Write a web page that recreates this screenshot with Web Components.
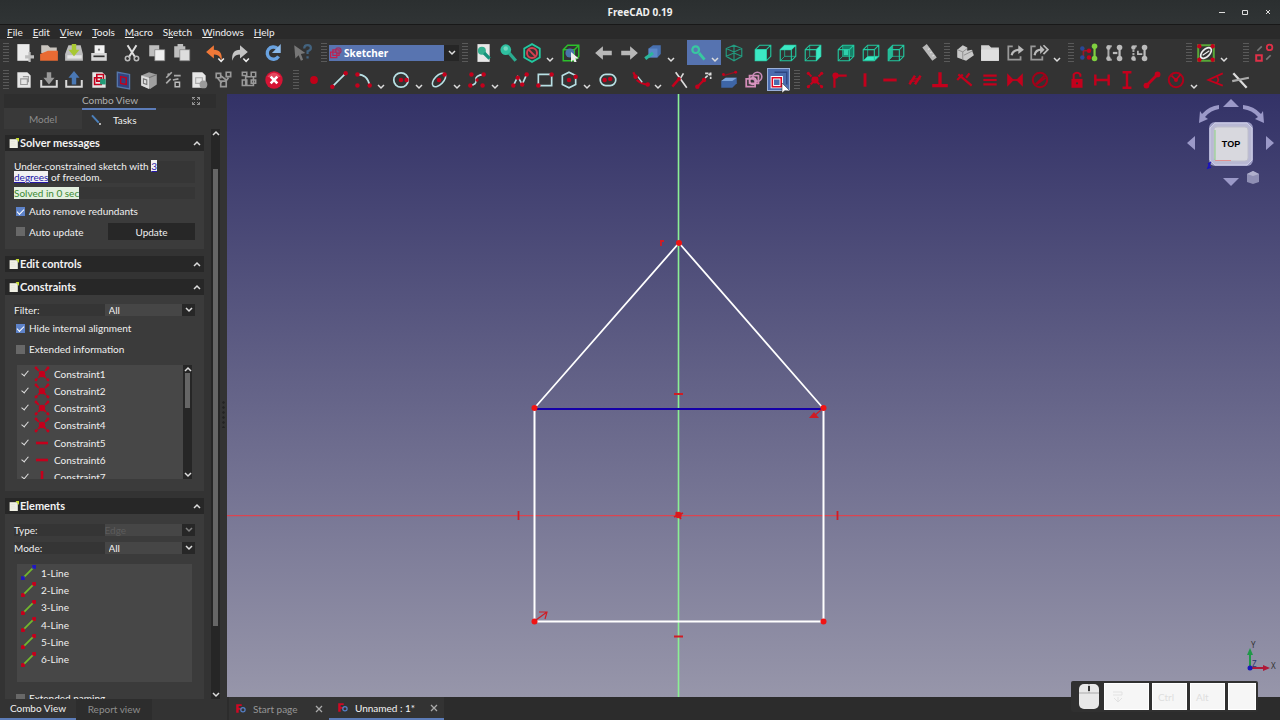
<!DOCTYPE html>
<html lang="en">
<head>
<meta charset="utf-8">
<title>FreeCAD 0.19</title>
<style>
html, body { margin: 0; height: 100%; background: #333; }
body { font-family: Lato, "Noto Sans", sans-serif; font-size: 10px; color: #f0f0f0; overflow: hidden; }
</style>
</head>
<body>
<cad-window></cad-window>
<script>
const R = '#c4001c', T = '#22c9a0', W = '#dcdcdc', B = '#b8e0e4';
const dot = (x, y, c = R, r = 2) => `<circle cx="${x}" cy="${y}" r="${r}" fill="${c}"/>`;
const stroke = (d, c, w = 1.5, extra = '') => `<path d="${d}" fill="none" stroke="${c}" stroke-width="${w}" ${extra}/>`;
const fill = (d, c, extra = '') => `<path d="${d}" fill="${c}" ${extra}/>`;
const cube = stroke('M3 7L7 3H17V13L13 17H3ZM3 7H13V17M13 7L17 3', T, 1);
const cubeBack = stroke('M7 3V13H17M7 13L3 17', T, .8, 'opacity=".8"');
const sheet = fill('M4 3H13L16 6V17H4Z', '#e6e6e6');
const linked = a => stroke('M8 4H5V16H8', '#aaa', 1.8, a) + dot(5, 5, '#bbb', 2) + dot(5, 15, '#bbb', 2) + stroke('M15 5V15', '#bbb', 2) + dot(15, 5, '#bbb', 2.5) + dot(15, 15, '#bbb', 2.5);
const ICONS = {
  'new': fill('M4 2H15V17H4Z', '#ececec') + fill('M11 12h3v-3h2v3h3v3h-3v3h-2v-3h-3z', '#bdbdbd'),
  open: fill('M3 3H9L11 5H17V10H3Z', '#c9c4be') + fill('M2 16V11L9 8H18V17H2Z', '#e86a33'),
  save: fill('M5 3H16L18 11V17H2V11Z', '#bdbdbd') + fill('M4 12H17V15H4Z', '#e4e4e4') + fill('M8 2h4v5h3l-5 6l-5-6h3z', '#a8c832'),
  print: fill('M6 3H15V10H6Z', '#f2f2f2') + fill('M3 10H17V17H3Z', '#d8d8d8') + stroke('M5 13H15', '#333', 1.5) + dot(10, 7, '#777', 1),
  cut: stroke('M6 3L13 14M14 3L7 14', '#e0e0e0', 1.8) + '<circle cx="6" cy="15" r="2" fill="none" stroke="#bbb" stroke-width="1.4"/><circle cx="14" cy="15" r="2" fill="none" stroke="#bbb" stroke-width="1.4"/>',
  copy: fill('M3 3H12V13H3Z', '#bebebe') + fill('M8 7H17V17H8Z', '#eee', 'stroke="#777" stroke-width=".6"'),
  paste: fill('M3 4H6V2H11V4H13V14H3Z', '#bebebe') + fill('M8 7H17V17H8Z', '#ddd', 'stroke="#777" stroke-width=".6"'),
  undo: fill('M2 9L9 3V7Q17 7 16 17Q14 11 9 11.500V15Z', '#f07838') + stroke('M13 15L15.500 17.500L18 15', '#eee', 1.4),
  redo: fill('M17 9L10 3V7Q2 7 3 17Q5 11 10 11.500V15Z', '#c4c4c4') + stroke('M13 15L15.500 17.500L18 15', '#eee', 1.4),
  refresh: stroke('M14 6A5.500 5.500 0 1 0 15 13', '#69a2e0', 3) + fill('M17 2V10H9Z', '#8ab8e8'),
  help: fill('M3 3L13 10L9 11L11 16L9 17L7 12L4 15Z', '#777') + '<path d="M12 6q0-3 3-3t3 2.500q0 2-3 3V11M15 13v2" fill="none" stroke="#43637f" stroke-width="2"/>',
  fitAll: fill('M5 2H16V18H5Z', '#e8e8e8') + dot(9, 8, '#35b090', 3.6) + stroke('M11 10L16 15', '#16927c', 3),
  fitSel: dot(8, 7, '#2fc0a0', 4.8) + dot(8, 6, '#73d8c0', 2) + stroke('M11 10L17 17', '#2aac90', 3),
  draw: stroke('M10 2L17 6V14L10 18L3 14V6Z', T, 1.6) + '<circle cx="10" cy="10" r="4.500" fill="none" stroke="#d64050" stroke-width="1.800"/>' + stroke('M7 7L13 13', '#d64050', 1.8),
  bbox: stroke('M3 7L7 3H17V13L13 17H3ZM3 7H13V17M13 7L17 3', '#2cc02c', 1.3) + dot(9, 10, '#4974a8', 4) + fill('M10 9L17 15L14 15L15 18L13 18L12 16L10 18Z', '#eee'),
  left: fill('M2 10L9 4V8H17V12H9V16Z', '#b8b8b8'), right: fill('M18 10L11 4V8H3V12H11V16Z', '#b8b8b8'),
  link: fill('M6 6L10 3H17V11L14 14H6Z', '#4870b0') + fill('M6 6H14V14H6Z', '#5b88c8') + stroke('M3 15L10 10', '#2ab69b', 3),
  zoom: dot(7, 7, '#38c8a0', 4) + dot(7, 7, '#5878b0', 2) + stroke('M10 10L15 16', '#38c8a0', 2.5),
  iso: stroke('M10 3L17 6V13L10 17L3 13V6ZM3 6L10 9L17 6M10 9V17M10 3V10L3 13M10 10L17 13', '#239c80', 1),
  front: cube + fill('M3 7H13V17H3Z', '#3ce8c4'), top: cubeBack + cube + fill('M3 7L7 3H17L13 7Z', '#3ce8c4'),
  rightv: cubeBack + cube + fill('M13 7L17 3V13L13 17Z', '#3ce8c4'), rear: fill('M7 3H17V13H7Z', '#178068') + cube + cubeBack + fill('M8 7H12V12H8Z', '#2fd0ac'),
  bottom: fill('M3 17L7 13H17L13 17Z', '#3ce8c4') + cube + cubeBack, leftv: fill('M3 7L7 3V13L3 17Z', '#27b898') + cube + cubeBack,
  ruler: fill('M4 5L8 2L17 14L13 17Z', '#b8b8b8') + stroke('M9 7l1.500-1M11 10l1.500-1M13 13l1.500-1', '#ddd', 1),
  part: fill('M3 7L8 3L12 5V8L16 7L18 12L11 17L3 14Z', '#c8c8c8') + stroke('M3 7L8 9L12 6M8 9V16M9 12L17 8', '#888', .8),
  group: fill('M2 3H9L11 5H18V17H2Z', '#d2d2d2') + fill('M2 7H18V17H2Z', '#e0e0e0'),
  exportl: stroke('M8 4H4V16H15V13', '#999', 1.6) + stroke('M7 12Q8 7 15 7', '#bbb', 2) + fill('M13 3L18 7L13 11Z', '#bbb'),
  exportm: stroke('M7 4H3V16H13V13', '#999', 1.6) + stroke('M6 12Q7 7 12 7', '#bbb', 2) + fill('M11 3L15 7L11 11Z', '#bbb') + stroke('M14 3L18 7L14 11', '#bbb', 1.5),
  conSel: stroke('M5 5V14M5 8H10', '#9a1828', 1.5) + dot(4, 6, '#284898') + dot(4, 14, '#284898') + dot(10, 8, R) + dot(10, 14, R) + stroke('M15 5V15', '#80d040', 2) + dot(15, 4, '#80d040', 2.5) + dot(15, 15, '#80d040', 2.5),
  links: linked('') + stroke('M9 10H13', '#bbb', 2), linkd: linked('stroke-dasharray="2 1"') + stroke('M9 8V11H13', '#bbb', 1.5),
  virtual: stroke('M3 3H17V17H3Z', '#58a838', 1.8) + dot(4, 4) + dot(16, 4) + dot(4, 16) + dot(16, 16) + '<ellipse cx="10" cy="10" rx="6" ry="3.300" transform="rotate(-45 10 10)" fill="#333" stroke="#eee" stroke-width="1.500"/>' + stroke('M7 12L13 8', '#eee', 1),
  clone: stroke('M3 12H8V17H3Z', '#e03048', 1.8) + '<circle cx="15" cy="5" r="2.500" fill="none" stroke="#e03048" stroke-width="1.600"/>' + stroke('M4 8L8 4M12 16L16 12', '#777', 1.5),
  edit: sheet + stroke('M7 9h6v5H7zM9 7h5v5', '#999', 1),
  leave: stroke('M3 10V16H17V10', '#d8d8d8', 1.8) + fill('M8 3h4v5h3l-5 6l-5-6h3z', '#999'),
  viewsk: stroke('M3 10V16H17V10', '#d8d8d8', 1.8) + fill('M8 14h4v-6h3l-5-6l-5 6h3z', '#4a78b4'),
  map: sheet + stroke('M6 8h6v6H6zM8 5h6v6H8z', R, 1.4) + fill('M11 9h5v5h-5z', '#229c78'),
  section: fill('M4 3L15 5V18L4 16Z', '#33447f', 'stroke="#5577aa" stroke-width="1.200"') + stroke('M7 7L12 8V14L7 13Z', R, 1.3),
  body: fill('M3 6L10 3L17 5V14L11 18L3 15Z', '#a0a0a0') + fill('M3 6L10 8V18L3 15Z', '#ddd') + stroke('M5 9l3 1v4l-3-1zM10 8l7-3', '#777', 1),
  validate: stroke('M3 8L8 3M10 6H16M3 13L7 9M9 10L14 9', '#aaa', 1.5) + stroke('M11 12h4v4h-4z', '#bbb', 1.3) + dot(5, 5, '#aaa', 1),
  merge: sheet + stroke('M7 8h6v5H7z', '#aaa', 1) + dot(14, 14, '#9a9a9a', 3.5),
  mirror: stroke('M3 4h4v4H3zM12 3h4v4h-4zM7 11h5v5H7zM7 6L12 10M14 8L11 12M4 8L8 13', '#999', 1.5),
  grid: stroke('M4 3h4v3H4zM12 3h4v4h-4zM4 10h4v5H4zM12 10h4v3h-4zM7 7h7v8H7z', '#999', 1.4),
  stop: dot(10, 10, '#d41434', 7.8) + '<path d="M4 7Q10 0 16 7Q10 9 4 7" fill="#ec6070" opacity=".7"/>' + stroke('M7 7L13 13M13 7L7 13', '#fff', 2.4),
  point: dot(10, 10, '#c00018', 3.5),
  line: stroke('M4 16L16 4', B) + dot(4, 16) + dot(16, 4),
  arc: stroke('M5 5Q14 5 16 15', B) + dot(5, 5) + dot(16, 15) + dot(5, 15),
  circle: '<circle cx="10" cy="10" r="6.500" fill="none" stroke="#b8e0e4" stroke-width="1.600"/>' + dot(10, 10) + dot(15, 10),
  conic: '<ellipse cx="10" cy="10" rx="7.500" ry="4" transform="rotate(-45 10 10)" fill="none" stroke="#b8e0e4" stroke-width="1.400"/>' + dot(10, 10) + dot(15, 5),
  spline: stroke('M4 15Q10 14 9 10T16 5', B) + dot(4, 15) + dot(5, 5) + dot(15, 15) + dot(16, 5) + dot(10, 10, R, 1.5),
  poly: stroke('M4 15L8 7L12 14L16 5', B) + dot(4, 15) + dot(8, 8) + dot(12, 14) + dot(16, 5),
  rect: stroke('M4 5H16V15H4Z', B) + dot(16, 5) + dot(4, 15),
  hex: stroke('M10 3L16 6V14L10 17L4 14V6Z', B) + dot(10, 10) + dot(16, 7),
  slot: '<rect x="3" y="5" width="14" height="10" rx="5" fill="none" stroke="#b8e0e4" stroke-width="1.500"/>' + dot(7, 10) + dot(12, 9),
  fillet: stroke('M4 3L6 7M7 10Q12 14 17 14', R, 2) + stroke('M8 7L12 12', B, 1.2) + dot(6, 7) + dot(17, 14),
  trim: stroke('M7 3L17 17M14 4L11 9', W) + stroke('M10 9L4 16', R, 2.2) + dot(10, 9, R, 1.7),
  extend: stroke('M4 16L10 10', R, 2) + dot(4, 16) + dot(10, 10) + stroke('M11 8L16 4M11 4H16V9', W, 1.5, 'stroke-dasharray="3 1"'),
  external: fill('M3 11L7 8H17V13L13 17H3Z', '#3e66a6') + fill('M3 11L7 8H17L13 11Z', '#7aa2d8') + stroke('M5 6L16 3', '#8c1422', 1.2) + dot(5, 5, R, 1.3) + dot(16, 3, R, 1.3),
  carbon: stroke('M3 9h8v7H3zM6 6h8v7H6z', '#d48cb8', 1.6) + '<circle cx="13" cy="7" r="4" fill="none" stroke="#c88cb8" stroke-width="1.500"/><circle cx="9" cy="11" r="3" fill="none" stroke="#d898c0" stroke-width="1.300"/>',
  construct: stroke('M6 3H17V14', '#2d4580', 1.2) + '<path d="M4 8H12V16H4Z" fill="none" stroke="#fff" stroke-width="3"/><path d="M4 8H12V16H4Z" fill="none" stroke="#e00824" stroke-width="1.400"/>',
  coincident: stroke('M4 4L16 16M16 4L4 16', R, 1.8, 'stroke-dasharray="4 1"') + dot(10, 10, R, 3.2) + dot(4, 4, R, 1.4) + dot(16, 4, R, 1.4) + dot(4, 16, R, 1.4) + dot(16, 16, R, 1.4),
  ponto: stroke('M5 17V6H16', R, 2) + dot(6, 6, R, 2.8), vert: stroke('M10 4V16', R, 2.6), horiz: stroke('M4 10H16', R, 2.6),
  parallel: stroke('M5 14L10 6M10 14L15 6', R, 2.2) + stroke('M5 11H12M8 9H15', R, 1.2), perp: stroke('M10 3V16M3 15H17', R, 3),
  tangent: stroke('M4 5L16 15M3 10L8 5M11 8L14 4', R, 2), equal: stroke('M4 6H16M4 10H16M4 14H16', R, 2),
  sym: fill('M3 4L9 10L3 16ZM17 4L11 10L17 16Z', R) + stroke('M8 10H12', R, 1.5), block: '<circle cx="10" cy="10" r="6.500" fill="none" stroke="#a40018" stroke-width="1.800"/>' + stroke('M6 14L14 6M7 14L15 8', '#a40018', 1.5),
  lock: fill('M5 9H15V17H5Z', R) + stroke('M7 9V5Q10 2 13 5V7', R, 1.8) + dot(10, 13, '#333', 1), hdist: stroke('M4 5V15M16 5V15M4 10H16', R, 2.2), vdist: stroke('M6 3H14M6 17H14M10 3V17', R, 2.2),
  dist: stroke('M4 16L16 4', R, 2.5) + dot(5, 15, R, 2.6) + dot(15, 5, R, 2.6), radius: '<circle cx="10" cy="10" r="6.500" fill="none" stroke="#b0001a" stroke-width="1.800"/>' + stroke('M10 10L14 5M6 6L10 10', R, 1.5) + dot(10, 10, R, 1.8),
  angle: stroke('M17 4L4 10L17 15M11 6Q15 10 11 13', R, 1.6), snell: stroke('M4 4L16 17', '#ddd', 2) + stroke('M3 11L18 8', '#aaa', 2),
  wb: stroke('M3 9h8v7H3zM6 6h8v7H6z', '#c02050', 1.6) + '<circle cx="13" cy="7" r="3.500" fill="none" stroke="#a03060" stroke-width="1.500"/>',
  note: fill('M3 3H17V18H3Z', '#f0f0e4') + fill('M13 1H19V8Z', '#c8e030') + stroke('M5 7H12M5 10H12M5 13H14', '#e0e0d8', 1),
  pencil: stroke('M4 3L14 14', '#4c80bc', 3) + dot(16, 16, '#ddd', 1.5),
  lineGreen: stroke('M4 16L16 4', '#72b82c', 1.8) + dot(4, 16, R, 2.3) + dot(16, 4, R, 2.3),
  lineBlue: stroke('M4 16L16 4', '#72b82c', 1.8) + '<path d="M2 14h4v4H2zM14 2h4v4h-4z" fill="#2018c0"/>',
  logo: fill('M3 3H12V6H7V9H11V12H7V17H3Z', '#d00824') + '<circle cx="14" cy="12" r="3.500" fill="none" stroke="#5580c8" stroke-width="2"/>'
};
const SVG = (n, s = 20, box = '1 1 18 18') => `<svg width="${s}" height="${s}" viewBox="${box}" aria-hidden="true">${ICONS[n] || ''}</svg>`;
const UP = '<svg width="8" height="6" viewBox="0 0 8 6" aria-hidden="true"><path d="M1 5L4 2L7 5" fill="none" stroke="#ddd" stroke-width="1.500"/></svg>';
const DOWN = UP.replace('M1 5L4 2L7 5', 'M1 1L4 4L7 1');
const CLOSE = '<svg width="8" height="8"><path d="M1 1L7 7M7 1L1 7" stroke="#aaa" stroke-width="1.300"/></svg>';
const define = (name, html) => customElements.define(name, class extends HTMLElement {
  connectedCallback() {
    if (this.shadowRoot) return;
    const root = this.attachShadow({ mode: 'open' });
    root.innerHTML = '<style>*{box-sizing:border-box}svg{flex:none}button,select,input{font:inherit;color:inherit;margin:0;border:0;background:none;padding:0}</style>' + (typeof html === 'function' ? html(this) : html);
  }
});

define('title-bar', `<style>
:host{display:grid;grid-template-columns:1fr auto 1fr;align-items:center;height:25px;background:linear-gradient(#2b2f30,#303435);border-bottom:1px solid #181818}
h1{grid-column:2;margin:0;font:700 10px "Noto Sans",sans-serif;color:#f0f0f0}
.c{justify-self:end;display:flex;gap:3px;padding-right:2px}
button{width:20px;height:20px;display:grid;place-items:center}
</style><h1><slot></slot></h1><div class="c">
<button aria-label="Minimize"><svg width="8" height="8"><path d="M1 4.500H7" stroke="#ddd"/></svg></button>
<button aria-label="Maximize"><svg width="8" height="8"><path d="M1.500 2.500H6.500V6.500H1.500Z" stroke="#ddd" fill="none"/></svg></button>
<button aria-label="Close"><svg width="8" height="8"><path d="M2 2L6 6M6 2L2 6" stroke="#ddd"/></svg></button></div>`);

define('menu-bar', `<style>:host{display:flex;height:14px;padding-left:2px;background:#2a2a2a}
button{padding:1px 5px 0;line-height:13px}u{text-underline-offset:1px}</style>
<button><u>F</u>ile</button><button><u>E</u>dit</button><button><u>V</u>iew</button><button><u>T</u>ools</button><button><u>M</u>acro</button><button>S<u>k</u>etch</button><button><u>W</u>indows</button><button><u>H</u>elp</button>`);

define('tool-row', `<style>:host{display:flex;align-items:center;height:27px;background:#333;overflow:hidden}</style><slot></slot>`);
define('tool-gap', `<style>:host{flex:0 0 8px}:host([size=wide]){flex-basis:32px}:host([size=narrow]){flex-basis:4px}</style>`);
define('tool-handle', `<style>:host{flex:0 0 11px;display:flex;justify-content:center}i{width:6px;height:22px;background:radial-gradient(circle,#5e5e5e 0 25%,#0000 50%) 0 0/2px 3px}</style><i></i>`);
define('tool-button', el => `<style>:host{flex:none;display:flex}
button{display:flex;position:relative;width:25px;height:25px;align-items:center;justify-content:center}
:host([menu]) button{width:38px;justify-content:flex-start;padding-left:2px}
:host([active]) button{background:#5673b0}
:host([active][menu]) button{width:34px}
:host([checked]) button{background:#4a6cae;border:1px solid #9ab0d8;width:23px;height:23px;margin:0 1px}
.m{align-self:flex-end;padding-bottom:2px;margin-left:4px;display:flex}
:host([active]) .m{margin-left:2px}
.p{position:absolute;left:13px;top:13px}
</style><button aria-label="${el.getAttribute('icon')}">${SVG(el.getAttribute('icon'))}${el.hasAttribute('menu') ? `<span class="m">${DOWN}</span>` : ''}${el.hasAttribute('checked') ? '<svg class="p" width="10" height="12"><path d="M1 1V11L4 8.500L9 9Z" fill="#fff" stroke="#222" stroke-width=".500"/></svg>' : ''}</button>`);
define('workbench-picker', `<style>:host{flex:0 0 130px;display:flex;height:16px;position:relative;background:#262626}
select{appearance:none;width:115px;height:16px;background:#5874b0;padding-left:15px;font:700 10px "Noto Sans",sans-serif;color:#fff;line-height:16px}
svg{pointer-events:none}.i{position:absolute;left:0;top:1px;display:flex}.a{display:grid;place-items:center;width:15px}</style>
<select aria-label="Workbench"><option>Sketcher</option></select><span class="i">${SVG('wb', 14)}</span><span class="a">${DOWN}</span>`);

define('task-section', el => `<style>:host{display:block;margin-bottom:7px;background:#3b3b3b}
h2{margin:0;font-size:11px;line-height:16px}
h2 button{display:flex;align-items:center;width:100%;height:16px;background:#272727;font-weight:700;text-align:left;padding:0 3px 0 4px;color:#f2f2f2}
h2 span{flex:1;padding-left:1px}
.b{display:flow-root;padding:0 9px}
</style><h2><button aria-expanded="true">${SVG('note', 10, '2 1 17 17')}<span>${el.getAttribute('heading')}</span>${UP}</button></h2><div class="b"><slot></slot></div>`);
define('check-row', el => `<style>:host{display:flex;align-items:center;height:12px}
label{display:flex;align-items:center;gap:4px;padding-left:2px;line-height:12px;white-space:nowrap}
input{appearance:none;width:9px;height:9px;background:#686868;display:grid;place-items:center}
input:checked{background:#5d82c8}
input:checked::after{content:"";width:6px;height:3px;border:solid #fff;border-width:0 0 1px 1px;transform:rotate(-45deg)}
</style><label><input type="checkbox" ${el.hasAttribute('on') ? 'checked' : ''}>${el.getAttribute('text')}</label>`);
define('field-row', el => `<style>:host{display:flex;align-items:center;height:12px}
label{flex:1 1 50%;background:#353535;line-height:12px}
.s{flex:1 1 50%;display:flex;min-width:0;background:#464646}
select{appearance:none;flex:1;min-width:0;height:12px;line-height:12px;padding-left:4px}
select:disabled{color:#5c5c5c;opacity:1;padding-left:0}
.a{width:13px;display:grid;place-items:center;background:#272727}
:host([off]) .a svg{opacity:.5}
</style><label for="s">${el.getAttribute('text')}</label><span class="s"><select id="s" ${el.hasAttribute('off') ? 'disabled' : ''}><option>${el.getAttribute('value')}</option></select><span class="a">${DOWN}</span></span>`);
define('scroll-strip', `<style>:host{display:flex;flex-direction:column;align-items:center;background:#262626;width:9px}
button{height:8px;display:flex;align-items:center}
.t{flex:1;display:flex;flex-direction:column;align-self:stretch;align-items:center}
.t::before{content:"";flex:var(--before)}.t i{width:5px;flex:var(--thumb);background:#666}.t::after{content:"";flex:var(--after)}
</style><button aria-label="Scroll up">${UP}</button><span class="t"><i></i></span><button aria-label="Scroll down">${DOWN}</button>`);
define('constraint-list', () => {
  const kinds = ['coincident', 'coincident', 'coincident', 'coincident', 'horiz', 'horiz', 'vert'];
  return `<style>:host{display:flex;height:114px;margin:0 3px;background:#474747}
.v{flex:1;overflow:hidden}ul{margin:0;padding:0;list-style:none;height:121px;display:flex;flex-direction:column}
li{flex:1;min-height:0}label{display:flex;align-items:center;height:100%}
input{appearance:none;width:8px;height:10px;margin:0 5px 0 4px}
input:checked::after{content:"";display:block;width:3px;height:6px;margin-left:2px;border:solid #e0e0e0;border-width:0 1px 1px 0;transform:rotate(40deg)}
svg{margin-right:4px}scroll-strip{--before:0;--thumb:35;--after:63}
</style><div class="v"><ul>${kinds.map((k, i) => `<li><label><input type="checkbox" checked>${SVG(k, 16, '2 2 16 16')}<span>Constraint${i + 1}</span></label></li>`).join('')}</ul></div><scroll-strip></scroll-strip>`;
});
define('element-list', `<style>:host{display:block;height:118px;margin:0 3px;background:#474747}
ul{margin:0;padding:0;list-style:none;height:104px;display:flex;flex-direction:column}
li{flex:1;min-height:0;display:flex;align-items:center;gap:5px;padding-left:4px}</style>
<ul>${[1, 2, 3, 4, 5, 6].map(n => `<li>${SVG(n === 1 ? 'lineBlue' : 'lineGreen', 15, '2 2 16 16')}<span>${n}-Line</span></li>`).join('')}</ul>`);

define('combo-view', `<style>
:host{display:flex;flex-direction:column;flex:0 0 227px;background:#333;min-height:0}
header{display:grid;grid-template-columns:1fr auto 1fr;height:14px;line-height:13px;margin:0 11px 0 4px;color:#b0b0b0;background:#2e2e2e}
header span{grid-column:2}header button{justify-self:end;padding-right:16px;display:flex;align-items:center}
nav{display:flex;height:21px;margin-left:4px;flex:none}
nav button{width:78px;color:#8c8c8c;background:#393939}
nav .on{width:74px;background:#333;color:#f0f0f0;border-top:2px solid #5c7cb8;display:flex;align-items:center;gap:11px;padding-left:8px}
.scroll{flex:1;display:flex;min-height:0}
.view{flex:1;overflow:hidden;padding:6px 7px 0 5px}
.scroll>scroll-strip{width:9px;--before:32;--thumb:453;--after:65}
.split{width:7px;display:flex;align-items:center;justify-content:center}
.split i{width:3px;height:28px;background:radial-gradient(circle,#222 0 30%,#0000 55%) 0 0/3px 5px}
.msg{margin-top:10px;line-height:11px;background:#363636}
.msg a{color:#2418a8;background:#f2f2f2}
.ok{margin-top:4px;line-height:12px;background:#363636}
.ok span{background:#e4f0e0;color:#3a8a32}
.two{display:flex;align-items:center;margin:6px 0 9px}
.two check-row{flex:1}.two button{width:87px;height:17px;background:#272727}
.a{margin-top:6px}.b{margin-top:9px}.c{margin-top:10px}
constraint-list{margin-bottom:12px}
footer{display:flex;height:21px;flex:none}
footer button{width:76px;border-bottom:2px solid #5c7cb8;line-height:19px}
footer button+button{color:#8e8e8e;background:#2d2d2d;border:0}
</style>
<header><span>Combo View</span><button aria-label="Float panel"><svg width="8" height="8"><path d="M0 3V.500H3M5 .500H7.500V3M7.500 5V7.500H5M3 7.500H.500V5M.500 .500L3 3M7.500 .500L5 3M.500 7.500L3 5M7.500 7.500L5 5" fill="none" stroke="#aaa" stroke-width=".800"/></svg></button></header>
<nav><button>Model</button><button class="on">${SVG('pencil', 12)}Tasks</button></nav>
<div class="scroll"><div class="view">
<task-section heading="Solver messages">
 <div class="msg">Under-constrained sketch with <a href="#dof">3<br>degrees</a> of freedom.</div>
 <div class="ok"><span>Solved in 0 sec</span></div>
 <check-row class="a" on text="Auto remove redundants"></check-row>
 <div class="two"><check-row text="Auto update"></check-row><button>Update</button></div>
</task-section>
<task-section heading="Edit controls"></task-section>
<task-section heading="Constraints">
 <field-row class="b" text="Filter:" value="All"></field-row>
 <check-row class="a" on text="Hide internal alignment"></check-row>
 <check-row class="b" text="Extended information"></check-row>
 <constraint-list class="c"></constraint-list>
</task-section>
<task-section heading="Elements">
 <field-row class="c" off text="Type:" value="Edge"></field-row>
 <field-row class="a" text="Mode:" value="All"></field-row>
 <element-list class="c"></element-list>
 <check-row class="c" text="Extended naming"></check-row>
</task-section>
</div><scroll-strip></scroll-strip><div class="split"><i></i></div></div>
<footer><button>Combo View</button><button>Report view</button></footer>`);

define('nav-cube', `<style>:host{display:block}text{font:700 9px "Liberation Sans",sans-serif}</style>
<svg width="96" height="96" viewBox="0 0 96 96" role="img" aria-label="Navigation cube">
<g fill="#9b99c8"><path d="M48 3L56 11H40ZM48 90L56 82H40ZM4 47L12 40V54ZM91 47L83 40V54Z"/>
<path d="M16 27L17 15L19 18Q26 10 36 9V13Q28 14 22 21L25 23ZM81 27L80 15L78 18Q71 10 60 9V13Q69 14 75 21L72 23Z"/></g>
<rect x="26" y="26" width="44" height="44" rx="6" fill="#9c9cc4"/><path d="M32 27H64L69 32V64L64 69H32L27 64V32Z" fill="#b9b9d4" stroke="#cfcfe8"/>
<rect x="31" y="31" width="34" height="34" rx="3" fill="#d8d8de" stroke="#c0c0cc"/>
<path d="M32 34V64" stroke="#88d080"/><path d="M32 64.500H48" stroke="#e09090"/>
<text x="48" y="51" text-anchor="middle" fill="#000">TOP</text>
<path d="M25 68L27 67L25 72L28 71" stroke="#1810c0" stroke-width="1.500" fill="none"/>
<g fill="#8f8fb4"><path d="M64 78L70 75L76 78V86L70 88L64 86Z"/><path d="M64 78L70 75L76 78L70 80Z" fill="#b0b0cc"/></g></svg>`);
define('axis-cross', `<style>:host{display:block}text{font:8px "Noto Sans",sans-serif}</style>
<svg width="36" height="38" viewBox="0 -4 36 38" role="img" aria-label="Axis cross"><path d="M8 26V12" stroke="#209848" stroke-width="2"/><path d="M5 13L8 6L11 13Z" fill="#209848"/>
<path d="M8 26H22" stroke="#b01838" stroke-width="2"/><path d="M21 23L28 26L21 29Z" fill="#b01838"/><circle cx="8" cy="26" r="2.500" fill="#1818b8"/>
<text x="9" y="6" fill="#333">Y</text><text x="29" y="27" fill="#333">X</text><text x="10" y="25" fill="#283070">Z</text></svg>`);
define('sketch-view', `<style>:host{position:relative;display:block;flex:1;min-height:0;background:linear-gradient(#333267,#9796aa);overflow:hidden}
.d{display:block;width:100%;height:100%}nav-cube{position:absolute;right:1px;top:2px}axis-cross{position:absolute;right:2px;bottom:19px}</style>
<svg class="d" viewBox="0 0 1053 603" preserveAspectRatio="xMidYMid slice" role="img" aria-label="Sketch of a house">
<path d="M0 421.700H1053" stroke="#dc4450" stroke-width="1.300"/><path d="M451.500 0V603" stroke="#8cf094" stroke-width="1.600"/>
<path d="M307.500 314L452 149L596 314" fill="none" stroke="#fff" stroke-width="1.800"/><path d="M307.500 314V527.500H596.500V314" fill="none" stroke="#fff" stroke-width="2"/>
<path d="M308 315H596" stroke="#1400a8" stroke-width="2"/>
<g fill="#f01414"><circle cx="307.500" cy="314" r="3"/><circle cx="596.500" cy="314" r="3"/><circle cx="307.500" cy="527.500" r="3"/><circle cx="596.500" cy="527.500" r="3"/><circle cx="452" cy="149" r="3"/><circle cx="451.500" cy="421" r="3.200"/></g>
<g fill="none" stroke="#d01c24" stroke-width="1.800"><path d="M291.500 417V426M610.500 417V426M447 300H456M447 542.500H456M433 147H437M434 148V152M447 423L456 419M449 418L454 425"/>
<path d="M309 526L320 518M312 518H320L318 525" stroke-width="1.200"/><path d="M594 316L587 322" stroke-width="1.200"/></g><path d="M582 324L587 318L592 324Z" fill="#d01c24"/></svg>
<nav-cube></nav-cube><axis-cross></axis-cross>`);
define('document-tabs', `<style>:host{display:flex;height:23px;flex:none;background:#2c2c2c;padding-left:2px}
div{display:flex;align-items:center;width:100px;padding:0 6px;background:#333;color:#969696;gap:7px}
div.on{width:115px;border-bottom:2px solid #5c7cb8;color:#f4f4f4;padding:0 6px 0 8px}.n{flex:1;text-align:left;white-space:nowrap}
.x{width:8px;height:8px;display:flex}</style>
<div>${SVG('logo', 11)}<button class="n">Start page</button><button class="x" aria-label="Close Start page">${CLOSE}</button></div>
<div class="on">${SVG('logo', 11)}<button class="n">Unnamed : 1*</button><button class="x" aria-label="Close Unnamed">${CLOSE}</button></div>`);
define('key-overlay', `<style>:host{display:flex;gap:3px;padding:2px;height:31px;background:#303030;border-radius:2px}
span{display:flex;align-items:center;padding-left:5px;width:35px;background:#f6f6f6;border:1px solid #fff;color:#dedede;font-size:10px}
.w{width:45px}.e{width:28px}.m{width:28px;background:none;border:0;padding-left:5px}</style>
<span class="m"><svg width="22" height="27" viewBox="0 0 22 27"><rect x="1" y="1" width="20" height="25" rx="5" fill="#e8e8e8"/><path d="M1 10H21M11 1V10" stroke="#aaa"/><path d="M11 3V8" stroke="#333" stroke-width="2"/></svg></span>
<span class="w"><svg width="20" height="18"><path d="M3 4H12V7H3M4 10L8 14L12 10M8 14V9" fill="none" stroke="#e2e2e2"/></svg></span><span>Ctrl</span><span>Alt</span><span class="e"></span>`);

const GAPS = { '|': '', '||': 'wide', '-': 'narrow' };
const tools = s => s.trim().split(/\s+/).map(t => t in GAPS ? `<tool-gap size="${GAPS[t]}"></tool-gap>` : t === '#' ? '<tool-handle></tool-handle>' : t === '@' ? '<workbench-picker></workbench-picker>' :
  `<tool-button icon="${t.replace(/[^a-zA-Z]/g, '')}"${t.includes('+') ? ' menu' : ''}${t.includes('!') ? ' active' : ''}${t.includes('*') ? ' checked' : ''}></tool-button>`).join('');
define('cad-window', `<style>:host{display:flex;flex-direction:column;height:100vh;position:relative}
main{flex:1;display:flex;min-height:0;margin-top:1px}.doc{flex:1;min-width:0;display:flex;flex-direction:column}
key-overlay{position:absolute;right:22px;bottom:8px}</style>
<title-bar>FreeCAD 0.19</title-bar><menu-bar></menu-bar>
<tool-row>${tools('# new open save print | cut copy paste | undo redo | refresh - help - # @ # fitAll fitSel draw+ bbox | left right link+ | zoom+! iso - front top rightv | rear bottom leftv | ruler # part group exportl exportm+ # conSel links linkd || # virtual+ | # clone')}</tool-row>
<tool-row>${tools('# edit leave viewsk map section body validate merge mirror grid stop - # point line arc+ circle+ conic+ spline+ - poly rect hex+ slot | fillet+ trim extend external carbon construct* # coincident ponto vert horiz parallel perp tangent equal sym block | - lock hdist vdist dist radius+ angle snell')}</tool-row>
<main><combo-view></combo-view><div class="doc"><sketch-view></sketch-view><document-tabs></document-tabs></div></main><key-overlay></key-overlay>`);
</script>
</body>
</html>
